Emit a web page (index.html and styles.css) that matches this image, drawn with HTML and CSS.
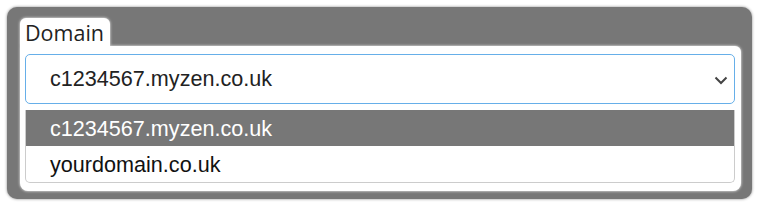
FILE: index.html
```html
<!DOCTYPE html>
<html lang="en">
<head>
  <meta charset="UTF-8" />
  <title>Domain</title>
  <link rel="stylesheet" href="styles.css">
</head>
<body>
  <div class="frame">
    <div class="tab">Domain</div>
    <div class="panel">
      <div class="select">
        <span>c1234567.myzen.co.uk</span>
        <svg class="chevron" width="14" height="9" viewBox="0 0 14 9">
          <path d="M1.5 1.5 L7 7 L12.5 1.5" fill="none" stroke="#444" stroke-width="2" />
        </svg>
      </div>
      <div class="options">
        <div class="option selected">c1234567.myzen.co.uk</div>
        <div class="option">yourdomain.co.uk</div>
      </div>
    </div>
  </div>
</body>
</html>
```

FILE: styles.css
```css
body {
  margin: 0;
  padding: 7px;
  background: #fff;
  font-family: 'Liberation Sans', Arial, sans-serif;
}

.frame {
  width: 721px;
  background: #777;
  border-radius: 10px;
  box-shadow: 0 0 3px #888;
  padding: 11px 11px 8px 13px;
}

.tab {
  display: inline-block;
  width: 85px;
  height: 28px;
  padding-left: 5px;
  background: #fff;
  border-radius: 6px 6px 0 0;
  box-shadow: 0 0 3px #fff;
  font-family: 'Open Sans', 'Noto Sans', sans-serif;
  font-size: 21.5px;
  line-height: 30px;
  color: #222;
  vertical-align: top;
}

.panel {
  background: #fff;
  border-radius: 0 6px 8px 8px;
  box-shadow: 0 0 3px #fff;
  padding: 8px 6px 8px 5px;
}

.select {
  display: flex;
  align-items: center;
  justify-content: space-between;
  height: 48px;
  border: 1px solid #66afe9;
  border-radius: 5px;
  padding: 0 6px 0 24px;
  font-size: 21.6px;
  color: #222;
}

.chevron {
  margin-top: 2px;
}

.options {
  margin-top: 6px;
  border: 1px solid #ccc;
  border-top: none;
  border-radius: 0 0 5px 5px;
  overflow: hidden;
}

.option {
  height: 36px;
  line-height: 37px;
  padding-left: 24px;
  font-size: 21.6px;
  color: #111;
}

.option.selected {
  background: #777;
  color: #fff;
}
```
